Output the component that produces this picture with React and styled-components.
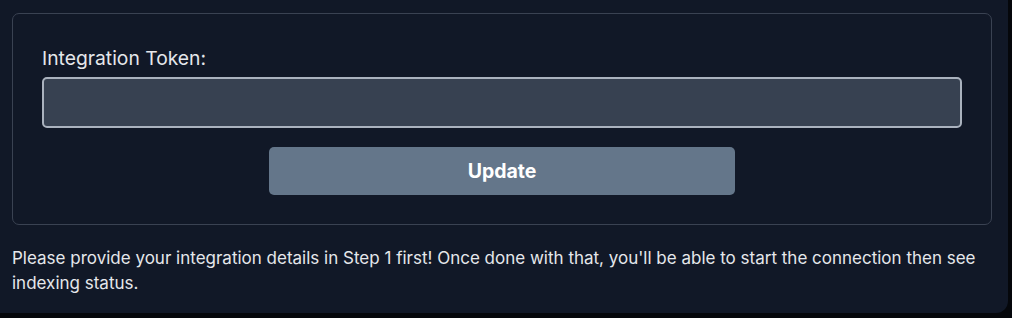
import styled, { createGlobalStyle } from 'styled-components';

const GlobalStyle = createGlobalStyle`
	html, body {
		margin: 0;
		padding: 0;
		background: #05070b;
	}
	body {
		font-family: Inter, "Noto Sans", sans-serif;
		-webkit-font-smoothing: antialiased;
	}
`;

const Panel = styled.div`
	width: 1008px;
	height: 313px;
	box-sizing: border-box;
	background-color: #111827;
	border-bottom-right-radius: 12px;
	padding: 13px 0 0 12px;
	overflow: hidden;
`;

const Card = styled.section`
	width: 980px;
	box-sizing: border-box;
	border: 1px solid #3a4252;
	border-radius: 7px;
	padding: 31px 29px 29px;
	display: flex;
	flex-direction: column;
`;

const Label = styled.label`
	color: #e5e7eb;
	font-size: 19.3px;
	line-height: 26px;
	margin-bottom: 6px;
`;

const TokenInput = styled.input`
	height: 51px;
	box-sizing: border-box;
	background-color: #374151;
	border: 2px solid #aab2be;
	border-radius: 5px;
	color: #f3f4f6;
	font-family: inherit;
	font-size: 16px;
	padding: 0 12px;
	outline: none;
`;

const Button = styled.button`
	align-self: center;
	width: 466px;
	height: 48px;
	margin-top: 19px;
	border: none;
	border-radius: 5px;
	background-color: #64768a;
	color: #ffffff;
	font-family: inherit;
	font-size: 19.5px;
	font-weight: 700;
	cursor: pointer;
`;

const Notice = styled.p`
	margin: 21px 0 0;
	color: #e5e7eb;
	font-size: 17px;
	line-height: 25px;
	width: 980px;
`;

export default function App() {
	return (
		<>
			<GlobalStyle />
			<Panel>
				<Card>
					<Label htmlFor="token">Integration Token:</Label>
					<TokenInput id="token" type="password" autoComplete="off" />
					<Button>Update</Button>
				</Card>
				<Notice>
					Please provide your integration details in Step 1 first! Once done with that, you'll be able to start
					the connection then see indexing status.
				</Notice>
			</Panel>
		</>
	);
}
